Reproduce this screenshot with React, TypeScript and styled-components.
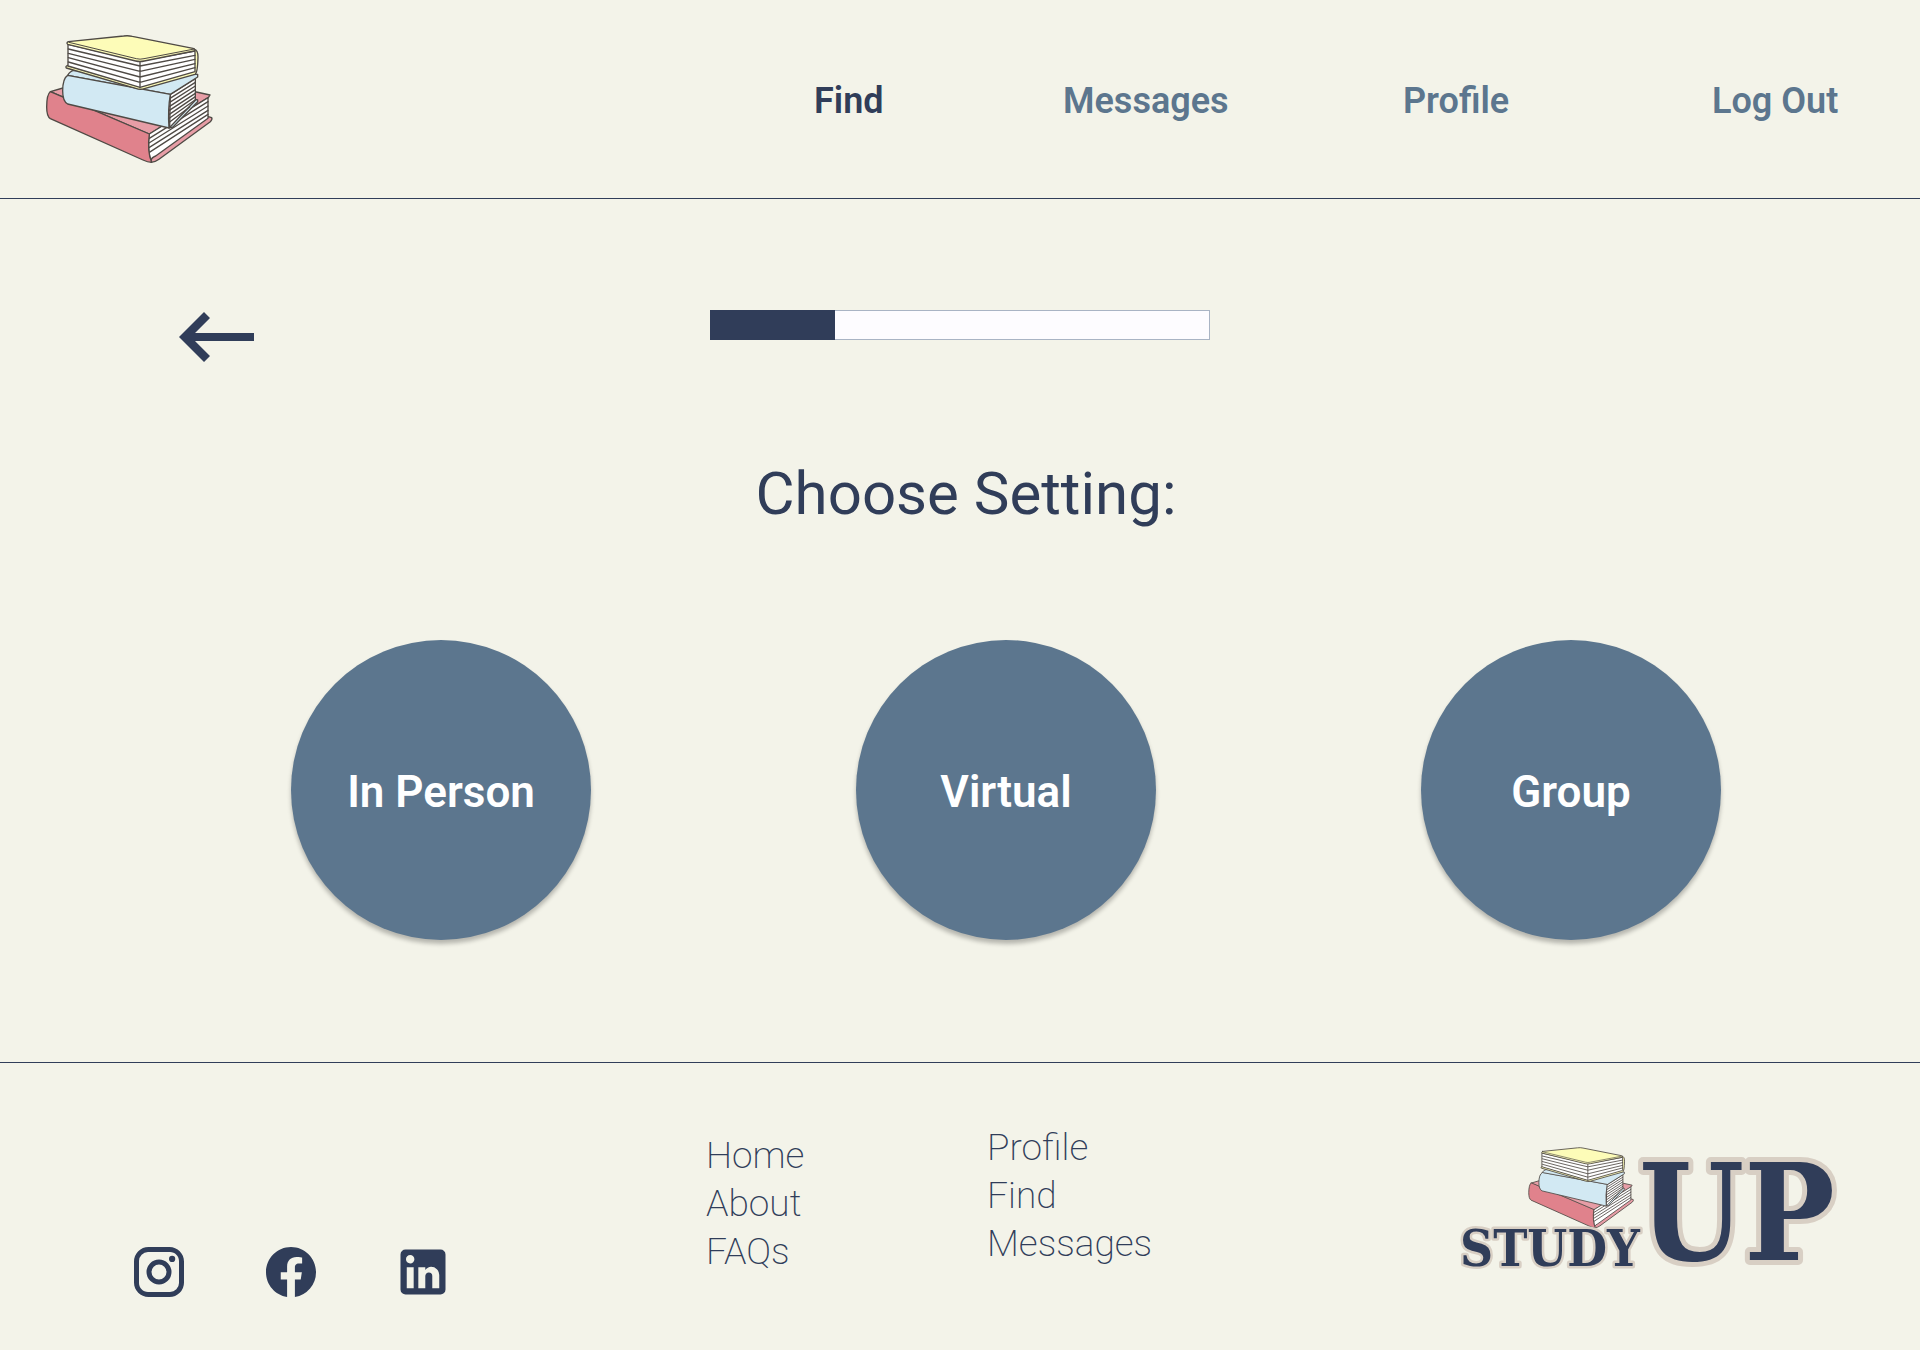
import React from "react";
import styled, { createGlobalStyle } from "styled-components";

const navy = "#303d59";
const slate = "#5c768e";
const cream = "#f3f3e9";

const GlobalStyle = createGlobalStyle`
  *, *::before, *::after { box-sizing: border-box; }
  body {
    margin: 0;
    background: ${cream};
    color: ${navy};
    font-family: Roboto, "Open Sans", sans-serif;
  }
`;

const Page = styled.div`
  min-height: 100vh;
  display: flex;
  flex-direction: column;
`;

const Header = styled.header`
  display: flex;
  align-items: center;
  justify-content: space-between;
  padding: 33px 76px 33px 43px;
  border-bottom: 1px solid ${navy};
`;

const HomeLink = styled.a`
  display: block;
  line-height: 0;
`;

const Nav = styled.nav`
  flex: 0 1 1030px;
  display: grid;
  grid-template-columns: 249fr 340fr 309fr 132fr;
  padding-top: 4px;
`;

const NavLink = styled.a<{ $active?: boolean }>`
  color: ${(p) => (p.$active ? navy : slate)};
  font-size: 36px;
  line-height: 48px;
  font-weight: 600;
  text-decoration: none;
  white-space: nowrap;
`;

const Main = styled.main`
  flex: 1;
  padding: 111px 0 120px;
`;

const StepRow = styled.div`
  display: grid;
  grid-template-columns: 1fr 500px 1fr;
  align-items: start;
`;

const BackButton = styled.button`
  justify-self: start;
  height: 54px;
  margin: 0 0 0 179px;
  padding: 0;
  border: 0;
  background: none;
  color: ${navy};
  display: flex;
  align-items: center;
  cursor: pointer;
`;

const Progress = styled.div`
  height: 30px;
  border: 1px solid #a9b4c4;
  background: #fdfcff;
`;

const ProgressFill = styled.div`
  height: 30px;
  margin: -1px 0 0 -1px;
  background: ${navy};
`;

const Title = styled.h1`
  margin: 88px 0 104px;
  padding-left: 12px;
  font-size: 60px;
  line-height: 84px;
  font-weight: 400;
  text-align: center;
`;

const Choices = styled.div`
  display: flex;
  justify-content: space-between;
  padding: 0 199px 0 291px;
`;

const Choice = styled.button`
  width: 300px;
  height: 300px;
  padding: 4px 0 0;
  border: 0;
  border-radius: 50%;
  background: ${slate};
  color: #fff;
  font-family: inherit;
  font-size: 44px;
  font-weight: 600;
  box-shadow: 0 4px 4px rgba(0, 0, 0, 0.25);
  cursor: pointer;
`;

const Footer = styled.footer`
  display: grid;
  grid-template-columns: 577fr 281fr 470fr auto;
  padding: 61px 88px 48px 129px;
  border-top: 1px solid ${navy};
`;

const Social = styled.div`
  display: flex;
  align-items: flex-end;
  gap: 72px;
  height: 178px;
`;

const SocialLink = styled.a`
  color: ${navy};
  line-height: 0;
`;

const LinkColumn = styled.nav<{ $raised?: boolean }>`
  display: flex;
  flex-direction: column;
  align-items: flex-start;
  padding-top: ${(p) => (p.$raised ? 0 : 8)}px;
`;

const FooterLink = styled.a`
  color: ${navy};
  font-size: 37px;
  line-height: 48px;
  font-weight: 200;
  text-decoration: none;
`;

const LogoLink = styled.a`
  line-height: 0;
  padding-top: 16px;
`;

const BookShapes = () => (
  <g stroke="#4f4a45" strokeWidth="4" strokeLinejoin="round" strokeLinecap="round">
    {/* bottom book */}
    <path fill="#e79da6" d="M62 216L100 205L500 217L541 226L536 234L359 343Z" />
    <path fill="#e79da6" d="M364 428Q378 427 388 419L542 306Q549 299 546 294L536 291L364 414Z" />
    <path fill="#fff" d="M359 343L535 234V296L378 409Q366 413 363 424Q353 385 359 343Z" />
    <path fill="none" d="M359 356L535 246M358 370L535 259M358 384L535 272M359 398L535 284" />
    <path fill="#e0828c" d="M62 216Q51 224 51 262Q51 290 62 297L340 421Q354 428 366 428Q352 395 359 343Z" />
    {/* middle book */}
    <path fill="#d2e9f3" d="M418 325L430 322L504 246V241L497 239L422 313Z" />
    <path fill="#fff" d="M422 224L497 177V242L425 318L420 322Z" />
    <path fill="none" d="M421 236L497 188M420 248L497 199M420 260L497 210M419 272L497 221M419 284L497 231M419 296L497 240M419 308L480 262" />
    <path fill="#d2e9f3" d="M114 167Q121 154 133 152L504 164V172L422 224Z" />
    <path fill="#d2e9f3" d="M114 167Q99 176 99 214Q99 245 114 253L418 325Q414 270 422 224Z" />
    {/* top book */}
    <path fill="#fdfcb8" d="M114 137Q106 140 110 145L318 206Q331 211 344 207L496 164Q504 160 505 112Q505 91 494 89L488 152L331 200Z" />
    <path fill="#fff" d="M115 74L331 124L496 94V156L331 203L115 139Z" />
    <path fill="none" d="M331 124V203M116 88L331 139L496 107M116 101L331 155L496 119M116 114L331 172L496 132M116 127L331 188L496 144" />
    <path fill="#fdfcb8" d="M116 66L282 49Q295 47 308 50L490 86Q500 90 493 94L344 124Q331 127 318 124L114 74Q109 70 116 66Z" />
    <path fill="none" strokeWidth="3" d="M118 68L320 117Q331 120 343 117L494 88" />
  </g>
);

const Books = () => (
  <svg width="173" height="132" viewBox="40 40 519 396" aria-hidden="true">
    <BookShapes />
  </svg>
);

const Logo = () => (
  <svg width="375" height="156" viewBox="0 0 375 156" overflow="visible" role="img" aria-label="Study Up">
    <g transform="translate(61 -2.5) scale(0.211)">
      <BookShapes />
    </g>
    <g
      fill={navy}
      stroke="#d8cfc4"
      strokeLinejoin="round"
      paintOrder="stroke"
      fontFamily='"DejaVu Serif Condensed", "DejaVu Serif", serif'
      fontWeight="700"
    >
      <text x="3" y="126" fontSize="51" strokeWidth="5">STUDY</text>
      <text x="182" y="120" fontSize="134" strokeWidth="10">UP</text>
    </g>
  </svg>
);

const socials = [
  {
    name: "Instagram",
    d: "M7.8 2h8.4C19.4 2 22 4.6 22 7.8v8.4a5.8 5.8 0 0 1-5.8 5.8H7.8C4.6 22 2 19.4 2 16.2V7.8A5.8 5.8 0 0 1 7.8 2m-.2 2A3.6 3.6 0 0 0 4 7.6v8.8C4 18.39 5.61 20 7.6 20h8.8a3.6 3.6 0 0 0 3.6-3.6V7.6C20 5.61 18.39 4 16.4 4H7.6m9.65 1.5a1.25 1.25 0 0 1 1.25 1.25A1.25 1.25 0 0 1 17.25 8 1.25 1.25 0 0 1 16 6.75a1.25 1.25 0 0 1 1.25-1.25M12 7a5 5 0 0 1 5 5 5 5 0 0 1-5 5 5 5 0 0 1-5-5 5 5 0 0 1 5-5m0 2a3 3 0 0 0-3 3 3 3 0 0 0 3 3 3 3 0 0 0 3-3 3 3 0 0 0-3-3z",
  },
  {
    name: "Facebook",
    d: "M12 2.04C6.5 2.04 2 6.53 2 12.06C2 17.06 5.66 21.21 10.44 21.96V14.96H7.9V12.06H10.44V9.85C10.44 7.34 11.93 5.96 14.22 5.96C15.31 5.96 16.45 6.15 16.45 6.15V8.62H15.19C13.95 8.62 13.56 9.39 13.56 10.18V12.06H16.34L15.89 14.96H13.56V21.96A10 10 0 0 0 22 12.06C22 6.53 17.5 2.04 12 2.04Z",
  },
  {
    name: "LinkedIn",
    d: "M19 3a2 2 0 0 1 2 2v14a2 2 0 0 1-2 2H5a2 2 0 0 1-2-2V5a2 2 0 0 1 2-2h14m-.5 15.5v-5.3a3.26 3.26 0 0 0-3.26-3.26c-.85 0-1.84.52-2.32 1.3v-1.11h-2.79v8.37h2.79v-4.93c0-.77.62-1.4 1.39-1.4a1.4 1.4 0 0 1 1.4 1.4v4.93h2.79M6.88 8.56a1.68 1.68 0 0 0 1.68-1.68c0-.93-.75-1.69-1.68-1.69a1.69 1.69 0 0 0-1.69 1.69c0 .93.76 1.68 1.69 1.68m1.39 9.94v-8.37H5.5v8.37h2.77z",
  },
];

const navItems = ["Find", "Messages", "Profile", "Log Out"];
const settings = ["In Person", "Virtual", "Group"];
const progress = 25;

export default function App() {
  return (
    <Page>
      <GlobalStyle />
      <Header>
        <HomeLink href="#" aria-label="Home">
          <Books />
        </HomeLink>
        <Nav aria-label="Main">
          {navItems.map((item) => (
            <NavLink key={item} href="#" $active={item === "Find"}>
              {item}
            </NavLink>
          ))}
        </Nav>
      </Header>

      <Main>
        <StepRow>
          <BackButton type="button" aria-label="Back">
            <svg width="76" height="50" viewBox="0 0 76 50" fill="currentColor" aria-hidden="true">
              <path d="M0 25L25 0L31 6L16 21H75V29H16L31 44L25 50Z" />
            </svg>
          </BackButton>
          <Progress
            role="progressbar"
            aria-label="Progress"
            aria-valuemin={0}
            aria-valuemax={100}
            aria-valuenow={progress}
          >
            <ProgressFill style={{ width: `${progress}%` }} />
          </Progress>
        </StepRow>

        <Title>Choose Setting:</Title>

        <Choices>
          {settings.map((s) => (
            <Choice key={s} type="button">
              {s}
            </Choice>
          ))}
        </Choices>
      </Main>

      <Footer>
        <Social>
          {socials.map((s) => (
            <SocialLink key={s.name} href="#" aria-label={s.name}>
              <svg width="60" height="60" viewBox="0 0 24 24" fill="currentColor" aria-hidden="true">
                <path d={s.d} />
              </svg>
            </SocialLink>
          ))}
        </Social>
        <LinkColumn aria-label="Site">
          <FooterLink href="#">Home</FooterLink>
          <FooterLink href="#">About</FooterLink>
          <FooterLink href="#">FAQs</FooterLink>
        </LinkColumn>
        <LinkColumn aria-label="Account" $raised>
          <FooterLink href="#">Profile</FooterLink>
          <FooterLink href="#">Find</FooterLink>
          <FooterLink href="#">Messages</FooterLink>
        </LinkColumn>
        <LogoLink href="#" aria-label="Study Up">
          <Logo />
        </LogoLink>
      </Footer>
    </Page>
  );
}
